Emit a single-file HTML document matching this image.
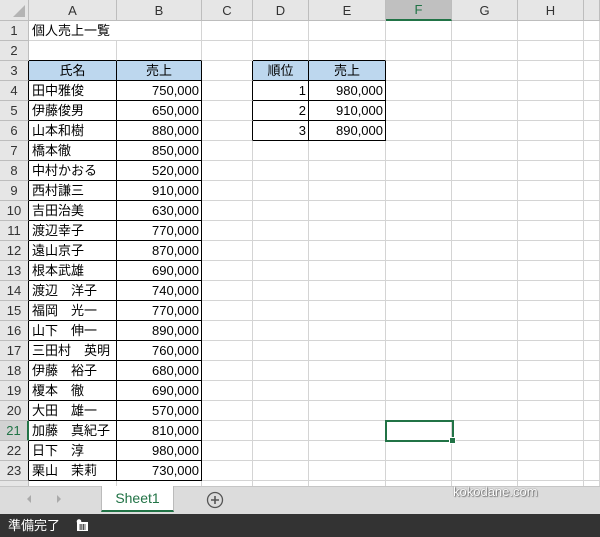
<!DOCTYPE html>
<html><head><meta charset="utf-8">
<style>
*{margin:0;padding:0;box-sizing:border-box}
body{width:600px;height:537px;overflow:hidden;background:#fff;font-family:"Liberation Sans","Noto Sans CJK JP",sans-serif;font-size:13px;color:#000;position:relative}
table{position:absolute;left:0;top:0;border-collapse:separate;border-spacing:0;table-layout:fixed;width:600px}
td{border-right:1px solid #d4d4d4;border-bottom:1px solid #d4d4d4;height:20px;padding:0 3px;white-space:nowrap;overflow:hidden;line-height:19px}
tr.h td{height:21px;background:#e6e6e6;color:#333;text-align:center;border-color:#bdbdbd;font-size:13px}
td.r{background:#e6e6e6;color:#333;text-align:center;border-color:#bdbdbd;padding:0}
td.n{text-align:right;padding-right:2px}
td.bl{border-right-color:#000}
td.bb{border-bottom-color:#000}
td.hd{background:#bdd7ee;text-align:center}
.sel{position:absolute;left:385px;top:420px;width:69px;height:22px;border:2px solid #217346}
.sel:after{content:"";position:absolute;right:-4px;bottom:-4px;width:5px;height:5px;background:#217346;border:1px solid #fff}
.tabs{position:absolute;left:0;top:486px;width:600px;height:28px;background:#dcdcdc;border-top:1px solid #c6c6c6}
.tab{position:absolute;left:101px;top:-1px;width:73px;height:26px;background:#fff;border-left:1px solid #bbb;border-right:1px solid #bbb;color:#217346;text-align:center;line-height:24px;font-size:14px;border-bottom:2px solid #217346}
.status{position:absolute;left:0;top:514px;width:600px;height:23px;background:#333;color:#fff;font-size:13px;line-height:23px;padding-left:8px}
</style></head><body>
<table>
<colgroup><col style="width:29px"><col style="width:88px"><col style="width:85px"><col style="width:51px"><col style="width:56px"><col style="width:77px"><col style="width:66px"><col style="width:66px"><col style="width:66px"><col style="width:16px"></colgroup>
<tr class="h"><td style="background:#e6e6e6"></td><td>A</td><td>B</td><td>C</td><td>D</td><td>E</td><td style="background:#c0c0c0;color:#217346;border-bottom:2px solid #217346">F</td><td>G</td><td>H</td><td></td></tr>
<tr><td class="r">1</td><td colspan="2" style="border-right:1px solid #d4d4d4">個人売上一覧</td><td></td><td></td><td></td><td></td><td></td><td></td><td></td></tr>
<tr><td class="r">2</td><td class="bb"></td><td class="bb"></td><td></td><td class="bb"></td><td class="bb"></td><td></td><td></td><td></td><td></td></tr>
<tr><td class="r bl">3</td><td class="hd bl bb">氏名</td><td class="hd bl bb">売上</td><td class="bl"></td><td class="hd bl bb">順位</td><td class="hd bl bb">売上</td><td></td><td></td><td></td><td></td></tr>
<tr><td class="r bl">4</td><td class="bl bb">田中雅俊</td><td class="n bl bb">750,000</td><td class="bl"></td><td class="n bl bb">1</td><td class="n bl bb">980,000</td><td></td><td></td><td></td><td></td></tr>
<tr><td class="r bl">5</td><td class="bl bb">伊藤俊男</td><td class="n bl bb">650,000</td><td class="bl"></td><td class="n bl bb">2</td><td class="n bl bb">910,000</td><td></td><td></td><td></td><td></td></tr>
<tr><td class="r bl">6</td><td class="bl bb">山本和樹</td><td class="n bl bb">880,000</td><td class="bl"></td><td class="n bl bb">3</td><td class="n bl bb">890,000</td><td></td><td></td><td></td><td></td></tr>
<tr><td class="r bl">7</td><td class="bl bb">橋本徹</td><td class="n bl bb">850,000</td><td></td><td></td><td></td><td></td><td></td><td></td><td></td></tr>
<tr><td class="r bl">8</td><td class="bl bb">中村かおる</td><td class="n bl bb">520,000</td><td></td><td></td><td></td><td></td><td></td><td></td><td></td></tr>
<tr><td class="r bl">9</td><td class="bl bb">西村謙三</td><td class="n bl bb">910,000</td><td></td><td></td><td></td><td></td><td></td><td></td><td></td></tr>
<tr><td class="r bl">10</td><td class="bl bb">吉田治美</td><td class="n bl bb">630,000</td><td></td><td></td><td></td><td></td><td></td><td></td><td></td></tr>
<tr><td class="r bl">11</td><td class="bl bb">渡辺幸子</td><td class="n bl bb">770,000</td><td></td><td></td><td></td><td></td><td></td><td></td><td></td></tr>
<tr><td class="r bl">12</td><td class="bl bb">遠山京子</td><td class="n bl bb">870,000</td><td></td><td></td><td></td><td></td><td></td><td></td><td></td></tr>
<tr><td class="r bl">13</td><td class="bl bb">根本武雄</td><td class="n bl bb">690,000</td><td></td><td></td><td></td><td></td><td></td><td></td><td></td></tr>
<tr><td class="r bl">14</td><td class="bl bb">渡辺　洋子</td><td class="n bl bb">740,000</td><td></td><td></td><td></td><td></td><td></td><td></td><td></td></tr>
<tr><td class="r bl">15</td><td class="bl bb">福岡　光一</td><td class="n bl bb">770,000</td><td></td><td></td><td></td><td></td><td></td><td></td><td></td></tr>
<tr><td class="r bl">16</td><td class="bl bb">山下　伸一</td><td class="n bl bb">890,000</td><td></td><td></td><td></td><td></td><td></td><td></td><td></td></tr>
<tr><td class="r bl">17</td><td class="bl bb">三田村　英明</td><td class="n bl bb">760,000</td><td></td><td></td><td></td><td></td><td></td><td></td><td></td></tr>
<tr><td class="r bl">18</td><td class="bl bb">伊藤　裕子</td><td class="n bl bb">680,000</td><td></td><td></td><td></td><td></td><td></td><td></td><td></td></tr>
<tr><td class="r bl">19</td><td class="bl bb">榎本　徹</td><td class="n bl bb">690,000</td><td></td><td></td><td></td><td></td><td></td><td></td><td></td></tr>
<tr><td class="r bl">20</td><td class="bl bb">大田　雄一</td><td class="n bl bb">570,000</td><td></td><td></td><td></td><td></td><td></td><td></td><td></td></tr>
<tr><td class="r bl" style="background:#d2d2d2;color:#217346;border-right:2px solid #217346">21</td><td class="bl bb">加藤　真紀子</td><td class="n bl bb">810,000</td><td></td><td></td><td></td><td></td><td></td><td></td><td></td></tr>
<tr><td class="r bl">22</td><td class="bl bb">日下　淳</td><td class="n bl bb">980,000</td><td></td><td></td><td></td><td></td><td></td><td></td><td></td></tr>
<tr><td class="r bl">23</td><td class="bl bb">栗山　茉莉</td><td class="n bl bb">730,000</td><td></td><td></td><td></td><td></td><td></td><td></td><td></td></tr>
<tr><td class="r" style="height:8px"></td><td style="height:8px"></td><td></td><td></td><td></td><td></td><td></td><td></td><td></td><td></td></tr>
</table>
<div style="position:absolute;left:13px;top:5px;width:0;height:0;border-left:12px solid transparent;border-bottom:12px solid #b4b4b4"></div>
<div class="sel"></div>
<div class="tabs">
<div style="position:absolute;left:27px;top:8px;width:0;height:0;border-top:4px solid transparent;border-bottom:4px solid transparent;border-right:4px solid #aaa"></div>
<div style="position:absolute;left:57px;top:8px;width:0;height:0;border-top:4px solid transparent;border-bottom:4px solid transparent;border-left:4px solid #aaa"></div>
<div class="tab">Sheet1</div>
<svg style="position:absolute;left:206px;top:4px" width="18" height="18" viewBox="0 0 18 18"><circle cx="9" cy="9" r="7.5" fill="none" stroke="#555" stroke-width="1.3"/><path d="M9 5v8M5 9h8" stroke="#555" stroke-width="1.6"/></svg>
<div style="position:absolute;left:453px;top:-3px;color:#fff;font-size:13px;text-shadow:0 0 1px #555,1px 1px 1px #777">kokodane.com</div>
</div>
<div class="status">準備完了
<svg style="position:absolute;left:76px;top:5px" width="13" height="13" viewBox="0 0 13 13"><rect x="1" y="3" width="11" height="9" fill="#fff"/><circle cx="3" cy="2.5" r="2.3" fill="#fff"/><path d="M3 6h7M3 8h7M3 10h7M5 5v6M7.5 5v6" stroke="#333" stroke-width="0.8"/></svg>
</div>
</body></html>
